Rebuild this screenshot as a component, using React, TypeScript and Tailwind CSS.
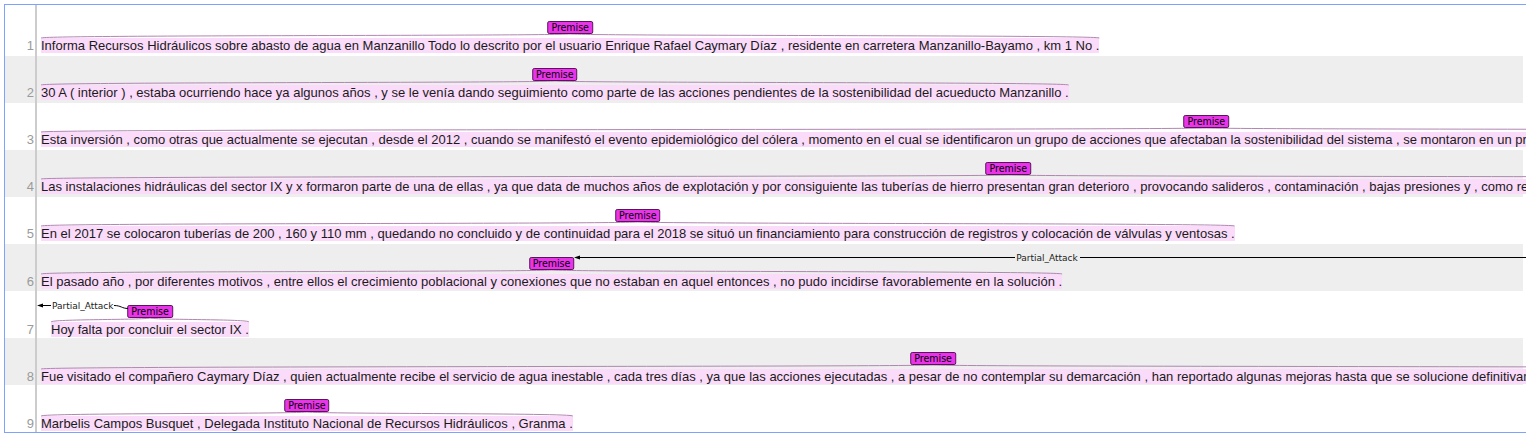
import React from "react";

type Row = {
  n: number;
  text: string;
  shift: string; // padding-top class for the text band
  indent?: boolean;
};

const rows: Row[] = [
  {
    n: 1,
    text: "Informa Recursos Hidráulicos sobre abasto de agua en Manzanillo Todo lo descrito por el usuario Enrique Rafael Caymary Díaz , residente en carretera Manzanillo-Bayamo , km 1 No .",
    shift: "pt-[29px]",
  },
  {
    n: 2,
    text: "30 A ( interior ) , estaba ocurriendo hace ya algunos años , y se le venía dando seguimiento como parte de las acciones pendientes de la sostenibilidad del acueducto Manzanillo .",
    shift: "pt-[29px]",
  },
  {
    n: 3,
    text: "Esta inversión , como otras que actualmente se ejecutan , desde el 2012 , cuando se manifestó el evento epidemiológico del cólera , momento en el cual se identificaron un grupo de acciones que afectaban la sostenibilidad del sistema , se montaron en un programa de inversiones que se ha ido ejecutando en la medida de las posibilidades financieras del país , y priorizando los sectores más afectados .",
    shift: "pt-[29px]",
  },
  {
    n: 4,
    text: "Las instalaciones hidráulicas del sector IX y x formaron parte de una de ellas , ya que data de muchos años de explotación y por consiguiente las tuberías de hierro presentan gran deterioro , provocando salideros , contaminación , bajas presiones y , como resultado , afectaciones constantes en el servicio a la población de dicha zona .",
    shift: "pt-[29px]",
  },
  {
    n: 5,
    text: "En el 2017 se colocaron tuberías de 200 , 160 y 110 mm , quedando no concluido y de continuidad para el 2018 se situó un financiamiento para construcción de registros y colocación de válvulas y ventosas .",
    shift: "pt-[29px]",
  },
  {
    n: 6,
    text: "El pasado año , por diferentes motivos , entre ellos el crecimiento poblacional y conexiones que no estaban en aquel entonces , no pudo incidirse favorablemente en la solución .",
    shift: "pt-[30px]",
  },
  {
    n: 7,
    text: "Hoy falta por concluir el sector IX .",
    shift: "pt-[31px]",
    indent: true,
  },
  {
    n: 8,
    text: "Fue visitado el compañero Caymary Díaz , quien actualmente recibe el servicio de agua inestable , cada tres días , ya que las acciones ejecutadas , a pesar de no contemplar su demarcación , han reportado algunas mejoras hasta que se solucione definitivamente la situación del abasto de agua del sector IX .",
    shift: "pt-[31px]",
  },
  {
    n: 9,
    text: "Marbelis Campos Busquet , Delegada Instituto Nacional de Recursos Hidráulicos , Granma .",
    shift: "pt-[31px]",
  },
];

function Premise({ text }: { text: string }) {
  return (
    <span className="relative block bg-[#fadcfa] text-[13px] leading-[15px] text-[#1a1a1a]">
      {text}
      <svg
        className="absolute left-0 -top-[4px] h-[4px] w-full overflow-visible"
        viewBox="0 0 100 4"
        preserveAspectRatio="none"
      >
        <path
          d="M0,4 C0,1 47,2 50,0 C53,2 100,1 100,4"
          fill="none"
          stroke="#b286b2"
          strokeWidth="1"
          vectorEffect="non-scaling-stroke"
        />
      </svg>
      <span className="absolute left-1/2 -top-[17px] -translate-x-1/2 rounded-[2px] border border-[#5a155a] bg-[#e934e9] px-[3px] text-[10.5px] leading-[11px] text-black [font-family:'DejaVu_Sans_Condensed','Liberation_Sans',sans-serif]">
        Premise
      </span>
    </span>
  );
}

export default function App() {
  return (
    <div className="h-[440px] w-[1526px] overflow-hidden bg-white pl-[4px] pt-[4px] [font-family:'Liberation_Sans',Arial,sans-serif]">
      <div className="relative h-[429px] w-[1530px] overflow-hidden border-b border-l border-t border-[#7fa2ff] pt-[4px]">
        {rows.map((r) => (
          <div
            key={r.n}
            className={`flex h-[47px] w-[1518px] ${r.n % 2 === 0 ? "bg-[#eeeeee]" : "bg-white"}`}
          >
            <div
              className={`w-[30px] shrink-0 pr-[1px] text-right text-[13px] leading-[15px] text-[#9a9a9a] ${r.shift}`}
            >
              {r.n}
            </div>
            <div className="w-[2px] shrink-0" />
            <div
              className={`flex items-start whitespace-nowrap ${r.indent ? "pl-[14px]" : "pl-[4px]"} ${r.shift}`}
            >
              <Premise text={r.text} />
            </div>
          </div>
        ))}

        {/* gutter rule */}
        <div className="absolute bottom-0 left-[30px] top-0 w-[2px] bg-[#cccccc]" />

        {/* relation arcs */}
        <svg
          className="pointer-events-none absolute left-0 top-0 h-[430px] w-[1530px]"
          viewBox="0 0 1530 430"
        >
          {/* row 6 */}
          <line x1="574" y1="252.5" x2="1525" y2="252.5" stroke="#000" strokeWidth="1" />
          <polygon points="569,252.5 575,250.5 575,254.5" fill="#000" />
          <rect x="1010" y="247" width="65" height="11" fill="#eeeeee" />
          <text
            x="1042"
            y="256"
            textAnchor="middle"
            fontSize="9"
            fill="#222"
            fontFamily="'DejaVu Sans', sans-serif"
          >
            Partial_Attack
          </text>
          {/* row 7 */}
          <line x1="36" y1="300.5" x2="46" y2="300.5" stroke="#000" strokeWidth="1" />
          <polygon points="32,300.5 38,298.5 38,302.5" fill="#000" />
          <text
            x="47"
            y="303.5"
            fontSize="9"
            fill="#222"
            fontFamily="'DejaVu Sans', sans-serif"
          >
            Partial_Attack
          </text>
          <path
            d="M109,300.5 C116,300.5 117,303.5 123,303.5"
            fill="none"
            stroke="#000"
            strokeWidth="1"
          />
        </svg>
      </div>
    </div>
  );
}
